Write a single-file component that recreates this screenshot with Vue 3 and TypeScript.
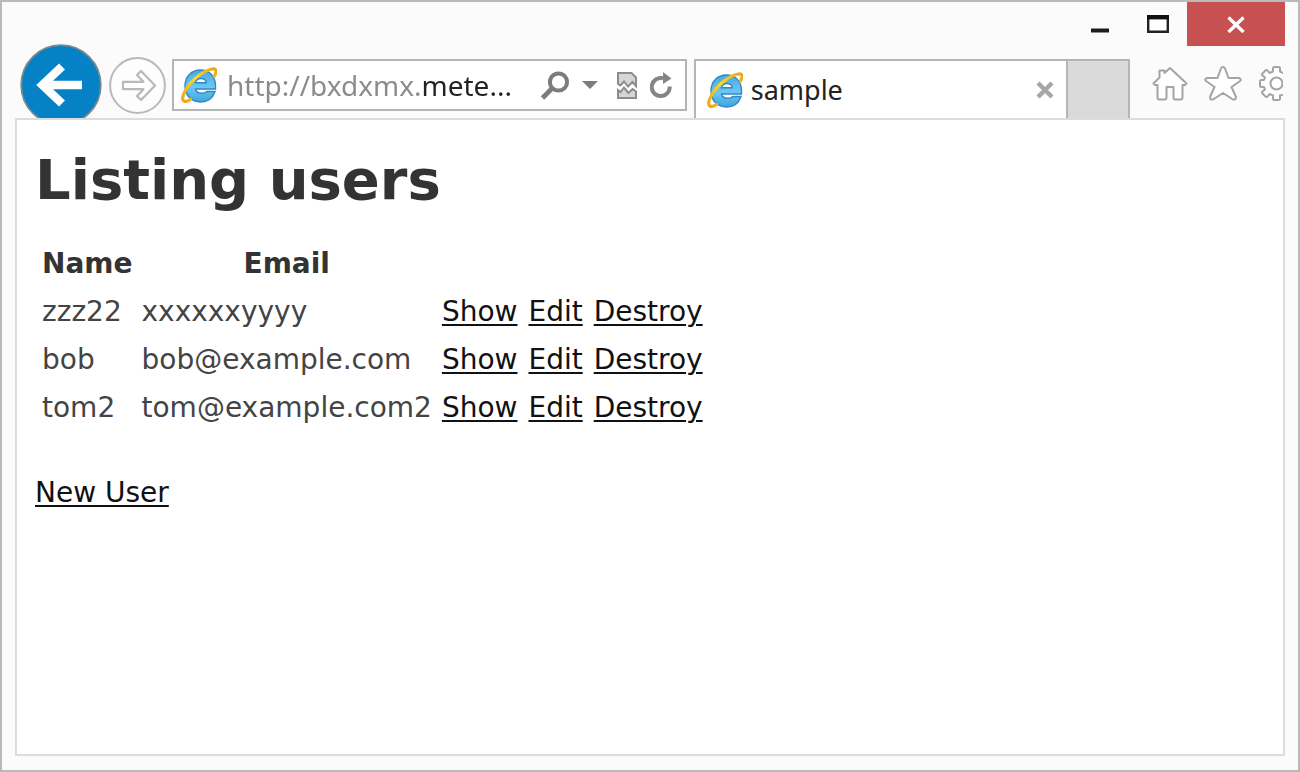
<script setup lang="ts">
import { ref } from 'vue'

interface User {
  name: string
  email: string
}

const address = ref('http://bxdxmx.mete...')
const actions: string[] = ['Show', 'Edit', 'Destroy']
const users: User[] = [
  { name: 'zzz22', email: 'xxxxxxyyyy' },
  { name: 'bob', email: 'bob@example.com' },
  { name: 'tom2', email: 'tom@example.com2' },
]
</script>

<template>
  <div class="window">
    <svg class="defs" width="0" height="0" aria-hidden="true">
      <defs>
        <linearGradient id="blue" x1="0" y1="0" x2="0" y2="1">
          <stop offset="0" stop-color="#4aa9e0" />
          <stop offset="0.55" stop-color="#6cc8f4" />
          <stop offset="1" stop-color="#3fa3dc" />
        </linearGradient>
        <linearGradient id="gold" x1="1" y1="0" x2="0" y2="1">
          <stop offset="0" stop-color="#e9a51c" />
          <stop offset="0.45" stop-color="#ffd91a" />
          <stop offset="1" stop-color="#f2a31b" />
        </linearGradient>
        <symbol id="browser" viewBox="0 0 36 36">
          <path
            d="M19.500 3C28.500 3 34.500 9.500 34.500 18.500V22H14.500C15.200 25 17.500 26.300 20.500 26.300C23 26.300 24.500 25.800 25.800 24.500H34C31.800 31 27 35 19.500 35C10.500 35 4 28.500 4 19C4 9.500 10.500 3 19.500 3ZM14.500 15.800H25.300C25 13 23 11.500 20 11.500C17 11.500 15 13 14.500 15.800Z"
            fill="url(#blue)"
            stroke="#3388c4"
            stroke-width="1.400"
          />
          <path
            d="M33.500 9C36 4 35.500 1.500 31.500 2C24 3 12 11 5.500 21.500C1.500 28 0.500 33 3.200 34.200C4.700 34.800 7 34.200 9.500 32.500"
            fill="none"
            stroke="url(#gold)"
            stroke-width="3.200"
            stroke-linecap="round"
          />
        </symbol>
      </defs>
    </svg>

    <header class="titlebar">
      <button class="caption minimize" type="button" aria-label="Minimize">
        <svg width="18" height="18" viewBox="0 0 18 18"><path d="M0 15.500H18" stroke="#1c1c1c" stroke-width="4" /></svg>
      </button>
      <button class="caption maximize" type="button" aria-label="Maximize">
        <svg width="22" height="18" viewBox="0 0 22 18">
          <path d="M1.200 2V16.800H20.800V2" fill="#fff" stroke="#222" stroke-width="2.400" />
          <path d="M0 2.200H22" stroke="#111" stroke-width="4.400" />
        </svg>
      </button>
      <button class="caption close" type="button" aria-label="Close">
        <svg width="18" height="18" viewBox="0 0 18 18"><path d="M1.500 2.500L16.500 17M16.500 2.500L1.500 17" stroke="#fff" stroke-width="3.400" /></svg>
      </button>
    </header>

    <nav class="toolbar" aria-label="Browser">
      <button class="back" type="button" aria-label="Back">
        <svg width="82" height="82" viewBox="0 0 82 82">
          <circle cx="41" cy="41" r="39.800" fill="#0482c5" stroke="#7b8890" stroke-width="1.800" />
          <path d="M62 41H24M42 22.500L22.500 41L42 59.500" fill="none" stroke="#fff" stroke-width="8.600" />
        </svg>
      </button>
      <button class="forward" type="button" aria-label="Forward">
        <svg width="57" height="57" viewBox="0 0 57 57">
          <circle cx="28.500" cy="28.500" r="27.400" fill="#fdfdfd" stroke="#b9b9b9" stroke-width="2" />
          <path
            d="M14 24.800H34.500L28 18L32 14L46 28.500L32 43L28 39L34.500 32.200H14Z"
            fill="#fff"
            stroke="#b9b9b9"
            stroke-width="2.200"
            stroke-linejoin="round"
          />
        </svg>
      </button>

      <div class="address">
        <svg class="logo" width="36" height="36" aria-hidden="true"><use href="#browser" /></svg>
        <input v-model="address" class="url" type="text" aria-label="Address" spellcheck="false" />
        <button class="tool" type="button" aria-label="Search">
          <svg width="30" height="30" viewBox="0 0 30 30" fill="none" stroke="#7c7c7c">
            <circle cx="18.500" cy="12" r="8.600" stroke-width="4" />
            <path d="M12.500 18L2.500 28" stroke-width="4.800" />
          </svg>
        </button>
        <button class="tool arrow" type="button" aria-label="Show address list">
          <svg width="16" height="8" viewBox="0 0 16 8"><path d="M0 0H16L8 8Z" fill="#7c7c7c" /></svg>
        </button>
        <button class="tool page" type="button" aria-label="Compatibility view">
          <svg width="20" height="27" viewBox="0 0 20 27" fill="#d6d6d6" stroke="#8c8c8c" stroke-width="2">
            <path d="M1 12V1H14.500L19 5.500V14L15.500 10L11 14.500L7 9.500L3.500 13.500Z" />
            <path d="M1 18V26H19V19.500L15.500 17L11.500 21L7 15.500L3.500 20Z" />
          </svg>
        </button>
        <button class="tool" type="button" aria-label="Refresh">
          <svg width="22" height="27" viewBox="0 0 22 27">
            <path d="M19.700 14.500A9 9 0 1 1 13 6.300" fill="none" stroke="#858585" stroke-width="4" />
            <path d="M13 0L21.500 6.500L13 12Z" fill="#858585" />
          </svg>
        </button>
      </div>

      <div class="tab">
        <svg class="logo" width="36" height="36" aria-hidden="true"><use href="#browser" /></svg>
        <span class="title">sample</span>
        <button class="tool" type="button" aria-label="Close tab">
          <svg width="18" height="18" viewBox="0 0 18 18"><path d="M2 2L16 16M16 2L2 16" stroke="#a6a6a6" stroke-width="4.400" /></svg>
        </button>
      </div>
      <button class="new-tab" type="button" aria-label="New tab"></button>

      <div class="commands">
        <button class="tool" type="button" aria-label="Home">
          <svg width="36" height="36" viewBox="0 0 36 36" fill="#fff" stroke="#a4a4a4" stroke-width="2" stroke-linejoin="round">
            <path d="M18 3L12.500 8V5.500H7.500V12.500L1.500 18.500L3 20H5.500V32.500Q5.500 34.500 7.500 34.500H12.500Q14.500 34.500 14.500 32.500V22H21.500V32.500Q21.500 34.500 23.500 34.500H28.500Q30.500 34.500 30.500 32.500V20H33L34.500 18.500Z" />
          </svg>
        </button>
        <button class="tool" type="button" aria-label="Favorites">
          <svg width="38" height="36" viewBox="0 0 38 36" fill="#fff" stroke="#a4a4a4" stroke-width="2" stroke-linejoin="round">
            <path d="M19 2Q20.500 2 21 3.500L24.500 13H35Q38 14.500 36 16L27.500 22L32 32Q32 35 29 34.500L19 28L9 34.500Q6 35 6 32L10.500 22L2 16Q0 14.500 3 13H13.500L17 3.500Q17.500 2 19 2Z" />
          </svg>
        </button>
        <button class="tool gear" type="button" aria-label="Tools">
          <svg width="25" height="36" viewBox="0 0 25 36" fill="#fff" stroke="#a4a4a4" stroke-width="2" stroke-linejoin="round">
            <path d="M15 6.500V3.500Q15 2 16.500 2H20.500Q22 2 22 3.500V6.500L26 8.500L28 6L32 10L29.500 13L31.500 15H35V22H31.500L29.500 25L32 28L28 32L26 29.500L22 30.500V33.500Q22 35 20.500 35H16.500Q15 35 15 33.500V30.500L11.500 29L9.500 31.500Q8.500 32.500 7.500 31.500L4.500 28.500Q3.500 27.500 4.500 26.500L7 24.500L6 22H3.500Q2 22 2 20.500V16.500Q2 15 3.500 15H6L7 12.500L4.500 10.500Q3.500 9.500 4.500 8.500L7.500 5.500Q8.500 4.500 9.500 5.500L11.500 8Z" />
            <circle cx="18.500" cy="18.500" r="6" />
          </svg>
        </button>
      </div>
    </nav>

    <main class="page-body">
      <h1>Listing users</h1>
      <table>
        <thead>
          <tr>
            <th scope="col">Name</th>
            <th scope="col">Email</th>
          </tr>
        </thead>
        <tbody>
          <tr v-for="user in users" :key="user.name">
            <td>{{ user.name }}</td>
            <td>{{ user.email }}</td>
            <td v-for="action in actions" :key="action" class="action"><a href="#">{{ action }}</a></td>
          </tr>
        </tbody>
      </table>
      <a class="new-user" href="#">New User</a>
    </main>
  </div>
</template>

<style>
body {
  margin: 0;
}
</style>

<style scoped>
.window {
  box-sizing: border-box;
  display: flex;
  flex-direction: column;
  min-height: 100vh;
  padding: 0 13px 14px;
  border: 2px solid #bababa;
  background: #fbfbfb;
  font-family: 'DejaVu Sans', Verdana, sans-serif;
}
.defs {
  position: absolute;
}
button {
  display: flex;
  flex: none;
  padding: 0;
  border: 0;
  background: none;
}
.titlebar {
  display: flex;
  justify-content: flex-end;
  align-items: flex-start;
  height: 42px;
}
.caption {
  justify-content: center;
  align-items: center;
  width: 58px;
  height: 44px;
}
.close {
  width: 98px;
  background: #c75050;
}
.toolbar {
  display: flex;
  align-items: flex-end;
  height: 74px;
  padding-left: 5px;
  overflow: hidden;
}
.back {
  align-self: flex-start;
  margin-right: 7px;
}
.forward {
  margin: 0 6px 4px 0;
}
.address {
  box-sizing: border-box;
  display: flex;
  flex: 520 1 0;
  align-items: center;
  height: 52px;
  min-width: 0;
  margin: 0 7px 7px 0;
  padding: 0 13px 0 7px;
  border: 2px solid #b5b5b5;
  background: #fff;
}
.logo {
  flex: none;
}
.url {
  flex: 1;
  width: 0;
  min-width: 0;
  height: 44px;
  margin: 0 8px 0 10px;
  padding: 0;
  border: 0;
  outline: 0;
  background: linear-gradient(90deg, #8a8a8a 195px, #222 195px);
  background-clip: text;
  -webkit-background-clip: text;
  color: transparent;
  font: 28px 'Noto Sans', 'Open Sans', sans-serif;
}
.arrow {
  margin: 0 19px 0 12px;
}
.page {
  margin-right: 13px;
}
.tab {
  box-sizing: border-box;
  display: flex;
  flex: 368 1 0;
  align-items: center;
  height: 59px;
  min-width: 0;
  padding: 0 12px 0 11px;
  border: 2px solid #b5b5b5;
  border-bottom: 0;
  background: #fff;
}
.title {
  flex: 1;
  margin-left: 8px;
  color: #222;
  font: 27px 'Noto Sans', 'Open Sans', sans-serif;
}
.new-tab {
  box-sizing: border-box;
  width: 62px;
  height: 59px;
  border: 2px solid #b5b5b5;
  border-width: 2px 2px 0 0;
  background: #dadada;
}
.commands {
  display: flex;
  flex: none;
  gap: 16px;
  margin: 0 2px 17px 22px;
}
.page-body {
  flex: 1;
  padding: 27px 18px;
  border: 2px solid #dcdcdc;
  background: #fff;
  color: #333;
  font-size: 28px;
  line-height: 40px;
}
h1 {
  margin: 0 0 25px;
  font-size: 56px;
  line-height: 66px;
}
table {
  border-spacing: 5px 4px;
}
th,
td {
  padding: 2px;
}
td {
  color: #444;
}
.action {
  padding: 2px 3px;
}
a {
  color: #111;
  text-decoration-thickness: 2px;
  text-underline-offset: 3px;
}
.new-user {
  display: inline-block;
  margin-top: 39px;
}
</style>
